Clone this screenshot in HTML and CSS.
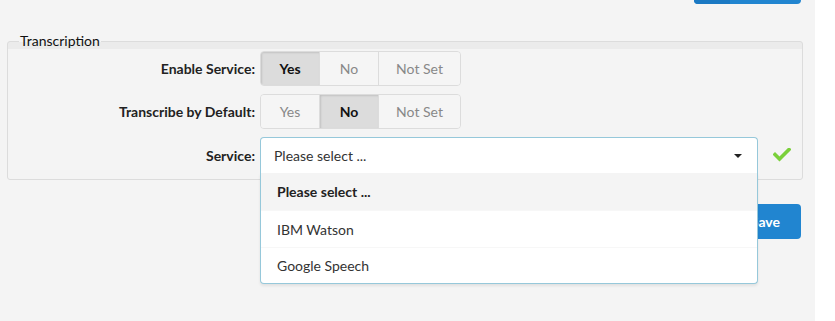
FILE: index.html
```html
<!DOCTYPE html>
<html lang="en">
<head>
  <meta charset="UTF-8" />
  <title>Transcription Settings</title>
  <link rel="stylesheet" href="styles.css">
</head>
<body>
  <div class="page">
    <div class="topbar">
      <button class="btn labeled" aria-label="Update"><span class="btn-icon"></span><span class="btn-text"></span></button>
    </div>

    <fieldset class="panel">
      <legend>Transcription</legend>

      <div class="row">
        <label class="label">Enable Service:</label>
        <div class="toggle">
          <span class="opt active">Yes</span>
          <span class="opt">No</span>
          <span class="opt wide">Not Set</span>
        </div>
      </div>

      <div class="row">
        <label class="label">Transcribe by Default:</label>
        <div class="toggle">
          <span class="opt">Yes</span>
          <span class="opt active">No</span>
          <span class="opt wide">Not Set</span>
        </div>
      </div>

      <div class="row">
        <label class="label">Service:</label>
        <div class="field">
          <div class="dropdown">
            <div class="select">
              <span>Please select ...</span>
              <span class="caret"></span>
            </div>
            <div class="menu">
              <div class="item selected">Please select ...</div>
              <div class="item">IBM Watson</div>
              <div class="item">Google Speech</div>
            </div>
          </div>
          <svg class="check" width="18" height="14" viewBox="0 0 18 14">
            <polyline points="2,6.5 6.5,11 16,1.5" fill="none" stroke="#7ad03a" stroke-width="3.6" stroke-linecap="square"/>
          </svg>
        </div>
      </div>
    </fieldset>

    <div class="actions">
      <button class="btn">Save</button>
    </div>
  </div>
</body>
</html>
```

FILE: styles.css
```css
html {
  background: #fff;
}
body {
  margin: 0;
  font-family: Lato, 'Open Sans', sans-serif;
  font-size: 14px;
  color: #222;
}
.page {
  width: 815px;
  height: 321px;
  background: #f4f4f4;
  overflow: hidden;
}
.topbar {
  display: flex;
  justify-content: flex-end;
  padding-right: 14px;
  margin-top: -31px;
}
.btn {
  font-family: Lato, sans-serif;
  font-size: 14px;
  font-weight: bold;
  color: #fff;
  background: #2185d0;
  border: none;
  border-radius: 4px;
  height: 35px;
  padding: 0 21px;
  cursor: pointer;
}
.btn.labeled {
  display: flex;
  padding: 0;
  width: 107px;
  overflow: hidden;
}
.btn-icon {
  width: 36px;
  background: #1b79c3;
}
.btn-text {
  flex: 1;
}
.panel {
  margin: 29px 12px 0 7px;
  padding: 0 0 6px 0;
  border: 1px solid #dcdcdc;
  border-radius: 3px;
  background: linear-gradient(#ebebeb 0, #ebebeb 7px, #f4f4f4 7px);
}
.panel legend {
  margin-left: 11px;
  padding: 0 1px;
  font-size: 14px;
  line-height: 16px;
  color: #111;
}
.row {
  display: grid;
  grid-template-columns: 247px 1fr;
  column-gap: 5px;
  align-items: center;
  margin-top: 8px;
}
.row:first-of-type {
  margin-top: 2px;
}
.label {
  text-align: right;
  font-weight: bold;
  color: #222;
}
.toggle {
  display: flex;
  width: 201px;
  height: 35px;
  box-sizing: border-box;
  border: 1px solid #dcdcdc;
  border-radius: 4px;
  overflow: hidden;
}
.opt {
  width: 58px;
  display: flex;
  align-items: center;
  justify-content: center;
  color: #888;
  background: #f5f5f5;
  border-left: 1px solid #dcdcdc;
}
.opt:first-child {
  border-left: none;
}
.opt.wide {
  flex: 1;
}
.opt.active {
  background: #dcdcdc;
  color: #111;
  font-weight: bold;
  box-shadow: inset 1px 1px 2px rgba(0, 0, 0, 0.12);
}
.field {
  display: flex;
  align-items: center;
  gap: 15px;
}
.dropdown {
  position: relative;
  width: 498px;
}
.select {
  height: 36px;
  box-sizing: border-box;
  display: flex;
  align-items: center;
  justify-content: space-between;
  padding: 0 13px;
  background: #fff;
  border: 1px solid #96c8da;
  border-bottom: none;
  border-radius: 4px 4px 0 0;
  color: #333;
}
.caret {
  width: 0;
  height: 0;
  border-left: 4px solid transparent;
  border-right: 4px solid transparent;
  border-top: 4px solid #222;
  margin-right: 2px;
}
.menu {
  position: absolute;
  top: 100%;
  left: 0;
  right: 0;
  background: #fff;
  border: 1px solid #96c8da;
  border-top: none;
  border-radius: 0 0 4px 4px;
  box-shadow: 0 2px 3px rgba(0, 0, 0, 0.08);
  z-index: 2;
}
.item {
  height: 37px;
  box-sizing: border-box;
  display: flex;
  align-items: center;
  padding-left: 16px;
  color: #333;
  border-top: 1px solid #f7f7f7;
}
.item:first-child {
  border-top: none;
  height: 37px;
}
.item:last-child {
  height: 36px;
}
.item.selected {
  background: #f4f4f4;
  font-weight: bold;
  color: #222;
}
.check {
  display: block;
}
.actions {
  display: flex;
  justify-content: flex-end;
  padding-right: 14px;
  margin-top: 24px;
}
```
